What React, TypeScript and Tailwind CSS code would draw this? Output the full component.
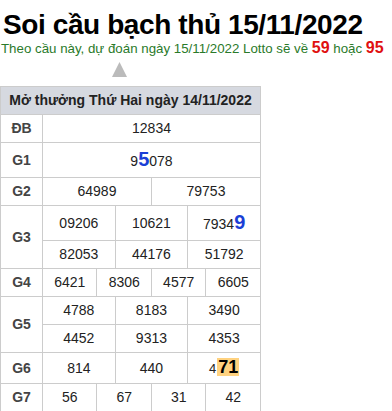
function Cell({ children, span, h }: { children: React.ReactNode; span: number; h: number }) {
  return (
    <td colSpan={span} className="border border-[#cccccc] p-0 text-center align-middle" style={{ height: h }}>
      {children}
    </td>
  )
}

function Label({ children, rows = 1 }: { children: React.ReactNode; rows?: number }) {
  return (
    <td rowSpan={rows} className="border border-[#cccccc] p-0 text-center font-bold text-[#444]">
      {children}
    </td>
  )
}

const Blue = ({ c }: { c: string }) => <span className="text-[20px] leading-[20px] font-bold text-[#1a3fd6]">{c}</span>

export default function App() {
  return (
    <div className="bg-white font-['Liberation_Sans',Arial,sans-serif] text-[#222]">
      <h1 className="whitespace-nowrap pt-[9px] pl-[3px] text-[28px] leading-[31px] font-bold tracking-[-0.4px] text-black">
        Soi cầu bạch thủ 15/11/2022
      </h1>
      <p className="whitespace-nowrap pl-[1px] text-[13.3px] leading-[16px] text-[#2a7a2a]">
        Theo cầu này, dự đoán ngày 15/11/2022 Lotto sẽ về{' '}
        <b className="text-[16px] leading-[16px] text-[#e01010]">59</b> hoặc{' '}
        <b className="text-[16px] leading-[16px] text-[#e01010]">95</b>
      </p>
      <div className="flex w-[261px] justify-center pt-[5px] pb-[9px] pr-[22px]">
        <svg width="15" height="15" viewBox="0 0 15 15">
          <polygon points="7.5,0 15,15 0,15" fill="#bbbbbb" />
        </svg>
      </div>
      <table className="w-[261px] table-fixed border-collapse text-[14px]">
        <colgroup>
          <col className="w-[42px]" />
          {Array.from({ length: 12 }).map((_, i) => (
            <col key={i} />
          ))}
        </colgroup>
        <tbody>
          <tr>
            <td colSpan={13} className="h-[28px] border border-[#cccccc] bg-[#d6d9e0] p-0 text-center font-bold text-[#222]">
              Mở thưởng Thứ Hai ngày 14/11/2022
            </td>
          </tr>
          <tr>
            <Label>ĐB</Label>
            <Cell span={12} h={28}>12834</Cell>
          </tr>
          <tr>
            <Label>G1</Label>
            <Cell span={12} h={35}>
              9<Blue c="5" />078
            </Cell>
          </tr>
          <tr>
            <Label>G2</Label>
            <Cell span={6} h={28}>64989</Cell>
            <Cell span={6} h={28}>79753</Cell>
          </tr>
          <tr>
            <Label rows={2}>G3</Label>
            <Cell span={4} h={35}>09206</Cell>
            <Cell span={4} h={35}>10621</Cell>
            <Cell span={4} h={35}>
              7934<Blue c="9" />
            </Cell>
          </tr>
          <tr>
            <Cell span={4} h={28}>82053</Cell>
            <Cell span={4} h={28}>44176</Cell>
            <Cell span={4} h={28}>51792</Cell>
          </tr>
          <tr>
            <Label>G4</Label>
            <Cell span={3} h={28}>6421</Cell>
            <Cell span={3} h={28}>8306</Cell>
            <Cell span={3} h={28}>4577</Cell>
            <Cell span={3} h={28}>6605</Cell>
          </tr>
          <tr>
            <Label rows={2}>G5</Label>
            <Cell span={4} h={28}>4788</Cell>
            <Cell span={4} h={28}>8183</Cell>
            <Cell span={4} h={28}>3490</Cell>
          </tr>
          <tr>
            <Cell span={4} h={28}>4452</Cell>
            <Cell span={4} h={28}>9313</Cell>
            <Cell span={4} h={28}>4353</Cell>
          </tr>
          <tr>
            <Label>G6</Label>
            <Cell span={4} h={31}>814</Cell>
            <Cell span={4} h={31}>440</Cell>
            <Cell span={4} h={31}>
              <span className="text-[13px]">4</span>
              <span className="ml-[1px] inline-block bg-[#ffd27f] px-[1px] text-[18px] leading-[18px] font-bold text-black">71</span>
            </Cell>
          </tr>
          <tr>
            <Label>G7</Label>
            <Cell span={3} h={28}>56</Cell>
            <Cell span={3} h={28}>67</Cell>
            <Cell span={3} h={28}>31</Cell>
            <Cell span={3} h={28}>42</Cell>
          </tr>
        </tbody>
      </table>
    </div>
  )
}
